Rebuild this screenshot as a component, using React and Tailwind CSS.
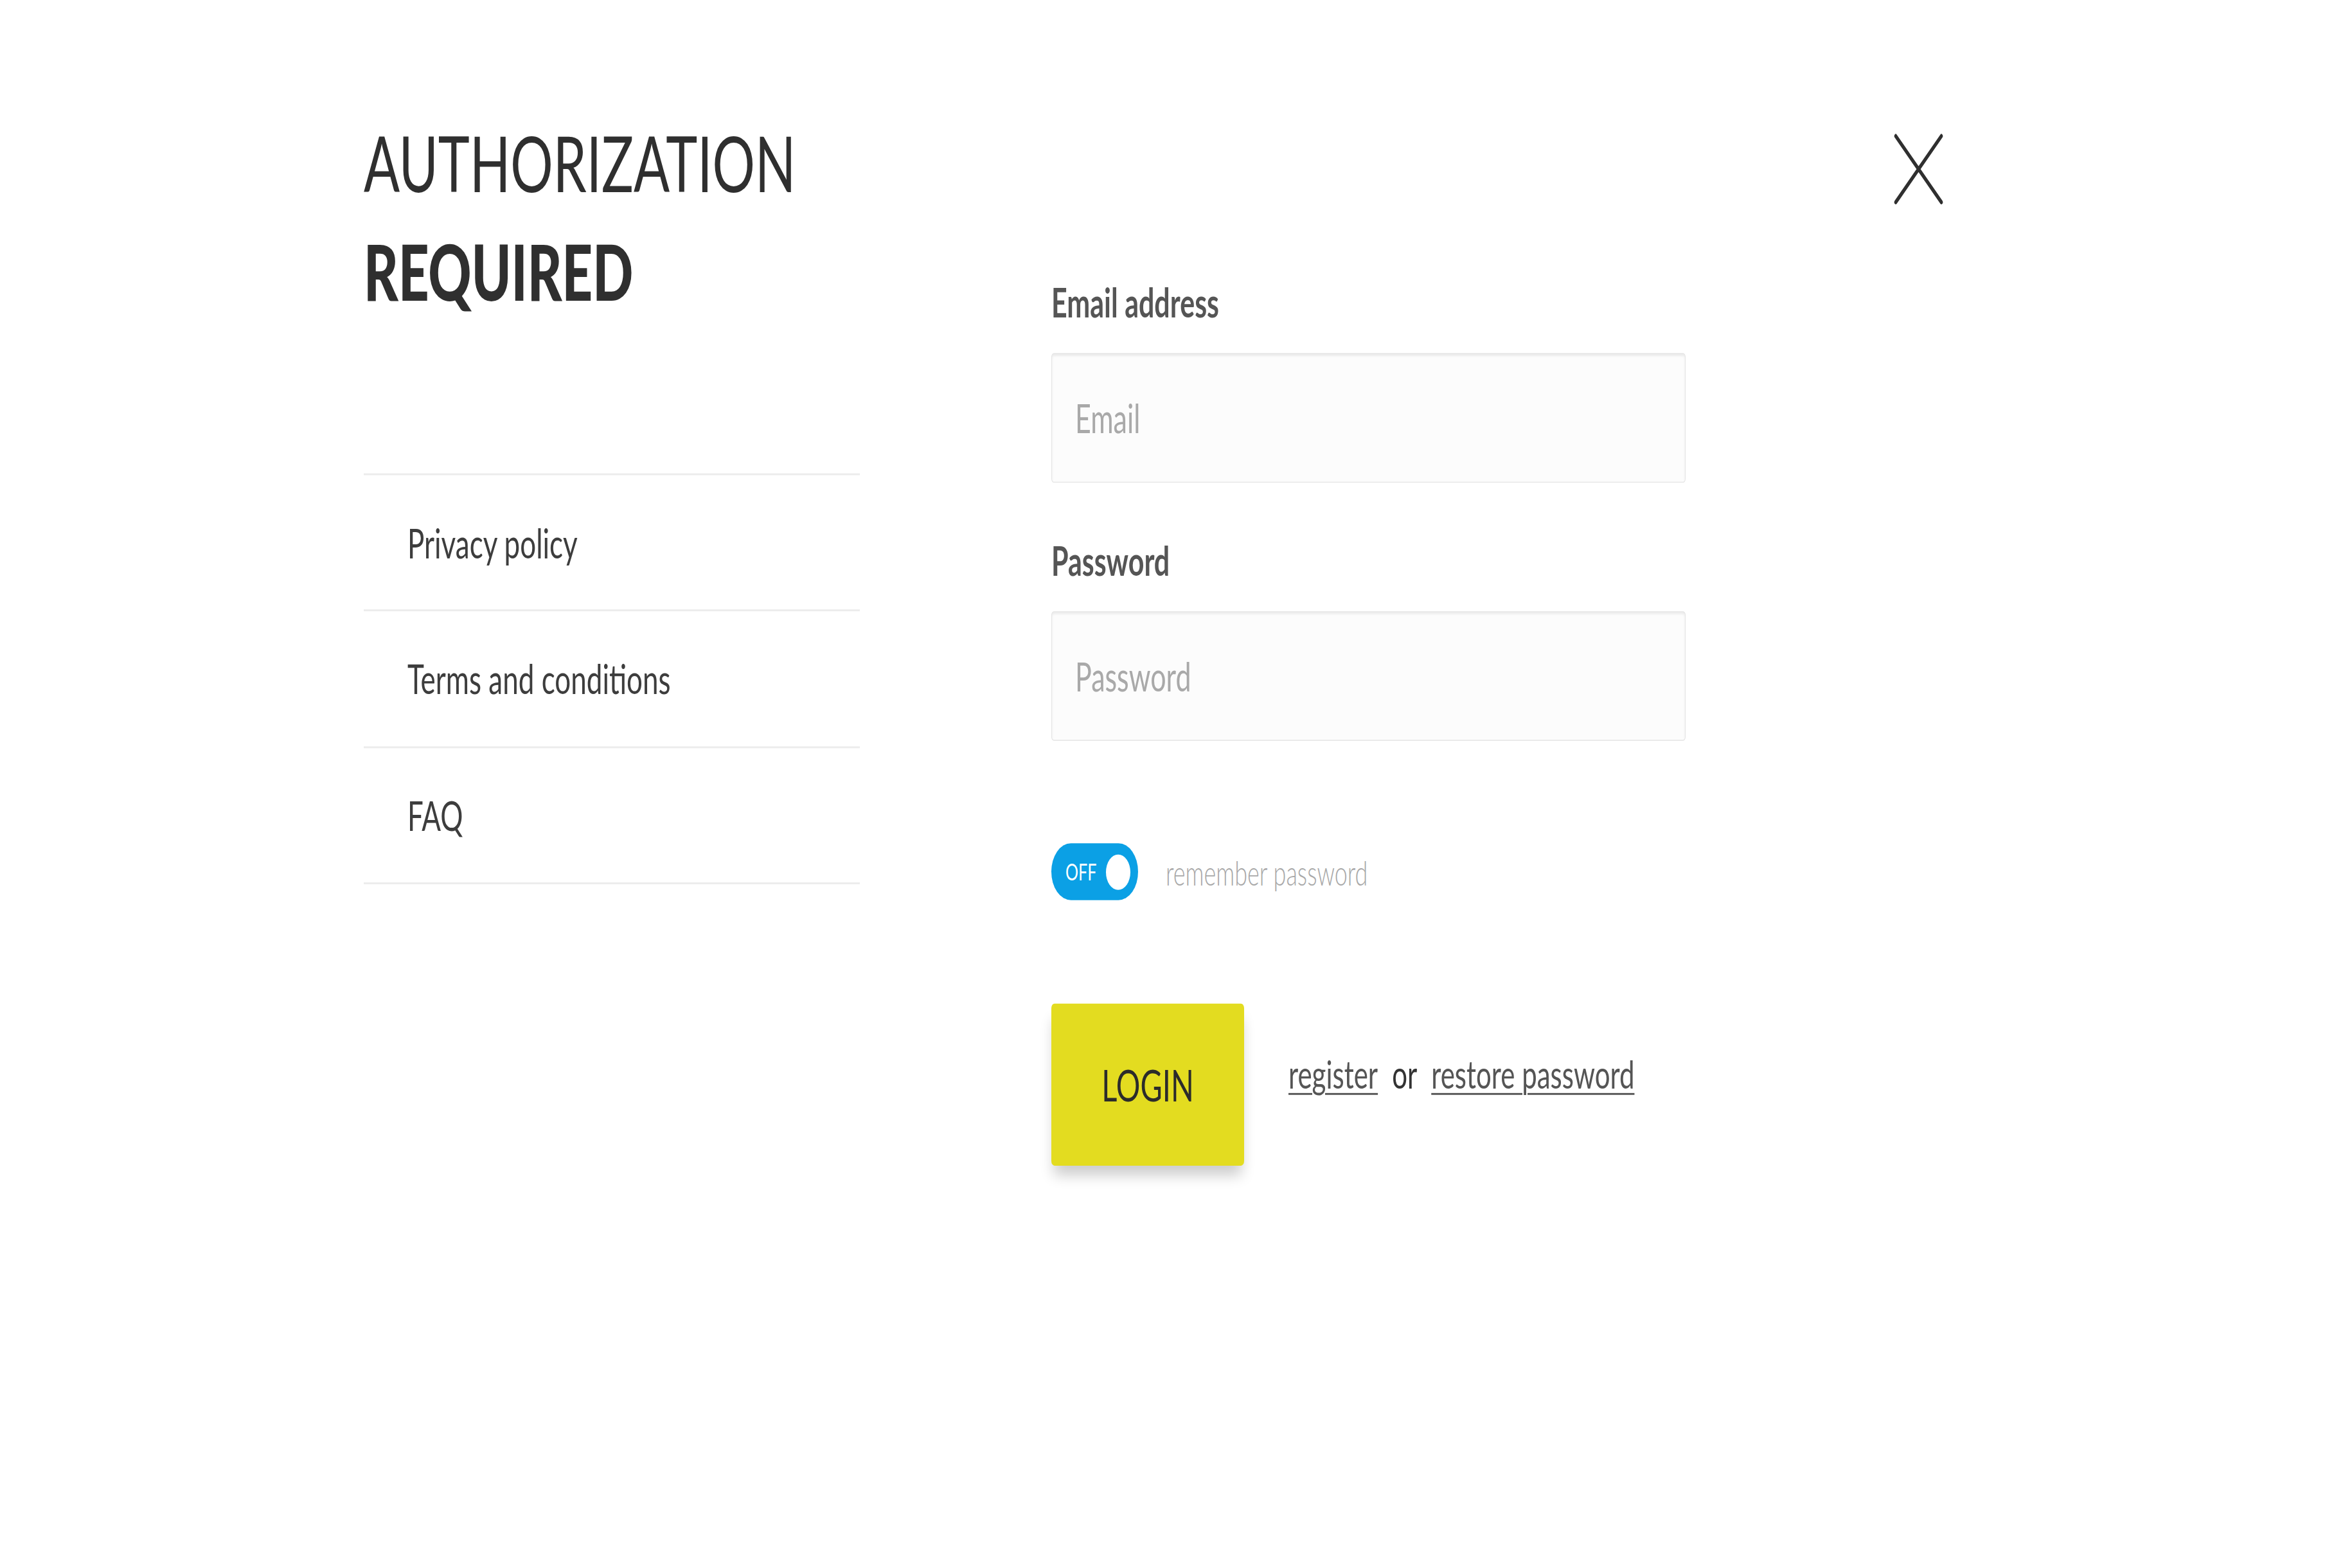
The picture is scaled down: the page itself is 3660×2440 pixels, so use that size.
export default function App() {
  const items = ["Privacy policy", "Terms and conditions", "FAQ"];
  return (
    <div className="w-full min-h-screen bg-white overflow-hidden">
      <div className="h-[1683px] w-full origin-top scale-y-[1.45] flex items-start font-[Lato,sans-serif] text-[#333]">
        {/* left column */}
        <div className="ml-[566px] w-[772px] shrink-0 pt-[116px]">
          <div className="h-[391.6px]">
            <div className="text-[83px] leading-[117px] text-[#2f2f2f] ml-[0px]">
              <div className="font-normal">AUTHORIZATION</div>
              <div className="font-black">REQUIRED</div>
            </div>
          </div>
          <ul className="border-b-2 border-[#ececec]">
            {items.map((t) => (
              <li
                key={t}
                className="h-[146.6px] border-t-2 border-[#ececec] flex items-center pl-[68px] text-[44px] text-[#3d3d3d]"
              >
                {t}
              </li>
            ))}
          </ul>
        </div>

        {/* right column: form */}
        <div className="ml-[298px] w-[987px] shrink-0 pt-[302.7px]">
          <label className="block h-[43px] text-[43px] leading-none font-bold text-[#555]">
            Email address
          </label>
          <input
            type="text"
            placeholder="Email"
            className="mt-[33.3px] block w-full h-[139.5px] rounded-[4px] border border-[#e4e4e4] bg-[#fcfcfc] pl-[36px] text-[43px] text-[#555] placeholder:text-[#a9a9a9] shadow-[inset_0_2px_3px_rgba(0,0,0,0.07)] outline-none font-[Lato,sans-serif]"
          />
          <label className="mt-[61.7px] block h-[43px] text-[43px] leading-none font-bold text-[#555]">
            Password
          </label>
          <input
            type="password"
            placeholder="Password"
            className="mt-[33.3px] block w-full h-[139px] rounded-[4px] border border-[#e4e4e4] bg-[#fcfcfc] pl-[36px] text-[43px] text-[#555] placeholder:text-[#a9a9a9] shadow-[inset_0_2px_3px_rgba(0,0,0,0.07)] outline-none font-[Lato,sans-serif]"
          />

          <div className="mt-[110px] flex items-center">
            <div className="w-[135px] h-[60.7px] rounded-full bg-[#0ba0e5] flex items-center justify-between pl-[22px] pr-[12px]">
              <span className="text-[25px] leading-none text-white">OFF</span>
              <span className="w-[38px] h-[38px] rounded-full bg-white" />
            </div>
            <span className="ml-[43px] text-[36px] font-light text-[#a8a8a8]">remember password</span>
          </div>

          <div className="mt-[111px] flex items-center">
            <button className="w-[300px] h-[174px] shrink-0 rounded-[5px] bg-[#e3dc20] text-[47px] text-[#2b2b2b] shadow-[0_14px_18px_-4px_rgba(0,0,0,0.2)] font-[Lato,sans-serif]">
              LOGIN
            </button>
            <div className="ml-[69px] mb-[24px] flex items-baseline gap-[22px] text-[42px]">
              <a href="#" className="text-[#555] underline decoration-2 underline-offset-[5px]">
                register
              </a>
              <span className="text-[#333]">or</span>
              <a href="#" className="text-[#555] underline decoration-2 underline-offset-[5px]">
                restore password
              </a>
            </div>
          </div>
        </div>

        {/* close */}
        <div className="ml-[324px] mt-[143.4px] shrink-0">
          <svg width="77" height="77" viewBox="0 0 77 77" fill="none">
            <path d="M3 3L74 74M74 3L3 74" stroke="#2f2f2f" strokeWidth="4.5" strokeLinecap="round" />
          </svg>
        </div>
      </div>
    </div>
  );
}
